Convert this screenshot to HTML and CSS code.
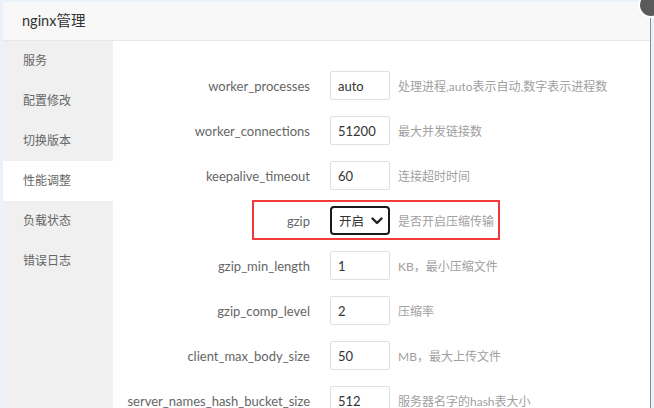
FILE: index.html
```html
<!DOCTYPE html>
<html lang="zh-CN">
<head>
  <meta charset="UTF-8" />
  <title>nginx管理</title>
  <link rel="stylesheet" href="styles.css">
</head>
<body>
  <div class="dialog">
    <div class="dialog-title">nginx管理</div>
    <span class="close-btn"></span>
    <div class="dialog-body">
      <ul class="side-menu">
        <li>服务</li>
        <li>配置修改</li>
        <li>切换版本</li>
        <li class="active">性能调整</li>
        <li>负载状态</li>
        <li>错误日志</li>
      </ul>
      <div class="content">
        <div class="form-row">
          <label>worker_processes</label>
          <input class="field" type="text" value="auto" />
          <span class="hint">处理进程,auto表示自动,数字表示进程数</span>
        </div>
        <div class="form-row">
          <label>worker_connections</label>
          <input class="field" type="text" value="51200" />
          <span class="hint">最大并发链接数</span>
        </div>
        <div class="form-row">
          <label>keepalive_timeout</label>
          <input class="field" type="text" value="60" />
          <span class="hint">连接超时时间</span>
        </div>
        <div class="form-row marked">
          <span class="mark"></span>
          <label>gzip</label>
          <span class="field select">开启
            <svg width="12" height="8" viewBox="0 0 12 8"><path d="M1.5 1.5 6 6l4.5-4.5" fill="none" stroke="#222" stroke-width="2.4" stroke-linecap="round" stroke-linejoin="round"/></svg>
          </span>
          <span class="hint">是否开启压缩传输</span>
        </div>
        <div class="form-row">
          <label>gzip_min_length</label>
          <input class="field" type="text" value="1" />
          <span class="hint">KB，最小压缩文件</span>
        </div>
        <div class="form-row">
          <label>gzip_comp_level</label>
          <input class="field" type="text" value="2" />
          <span class="hint">压缩率</span>
        </div>
        <div class="form-row">
          <label>client_max_body_size</label>
          <input class="field" type="text" value="50" />
          <span class="hint">MB，最大上传文件</span>
        </div>
        <div class="form-row">
          <label>server_names_hash_bucket_size</label>
          <input class="field" type="text" value="512" />
          <span class="hint">服务器名字的hash表大小</span>
        </div>
      </div>
    </div>
  </div>
</body>
</html>
```

FILE: styles.css
```css
*,*::before,*::after{box-sizing:border-box;margin:0;padding:0}
html,body{height:100%;overflow:hidden}
body{background:#ebf2fa;font-family:Lato,"Noto Sans CJK SC",sans-serif;font-size:13px;color:#333;padding:2px 0 0 3px}
.dialog{position:relative;background:#fff;height:420px;border-right:1px solid #8a8a8a;margin-right:3px}
.dialog-title{height:39px;line-height:38px;padding-left:19px;font-size:14.5px;color:#333;background:#f8f8f8;border-bottom:1px solid #e8e8e8}
.close-btn{position:absolute;right:-14px;top:-10px;width:26px;height:26px;border-radius:50%;background:#5a5a5a;border:2px solid #fff}
.dialog-body{display:flex;height:100%}
.side-menu{list-style:none;width:110px;background:#f0f0f0;flex-shrink:0}
.side-menu li{height:40px;line-height:40px;padding-left:20px;font-size:12px;color:#666}
.side-menu li.active{background:#fff}
.content{flex:1;padding-top:22px}
.form-row{position:relative;display:flex;align-items:center;height:45px}
.form-row label{width:197px;text-align:right;color:#666;margin-right:20px}
.field{width:60px;height:29px;border:1px solid #e0e0e0;border-radius:2px;padding:0 7px;font:inherit;color:#333;background:#fff;outline:none}
.select{display:flex;align-items:center;justify-content:space-between;border:2px solid #1a1a1a;border-radius:4px;padding:0 5px 0 7px;font-size:12.5px}
.hint{margin-left:8px;font-size:12px;color:#a0a0a0}
.mark{position:absolute;left:139px;top:2px;width:248px;height:40px;border:2px solid #f23a3a}
```
